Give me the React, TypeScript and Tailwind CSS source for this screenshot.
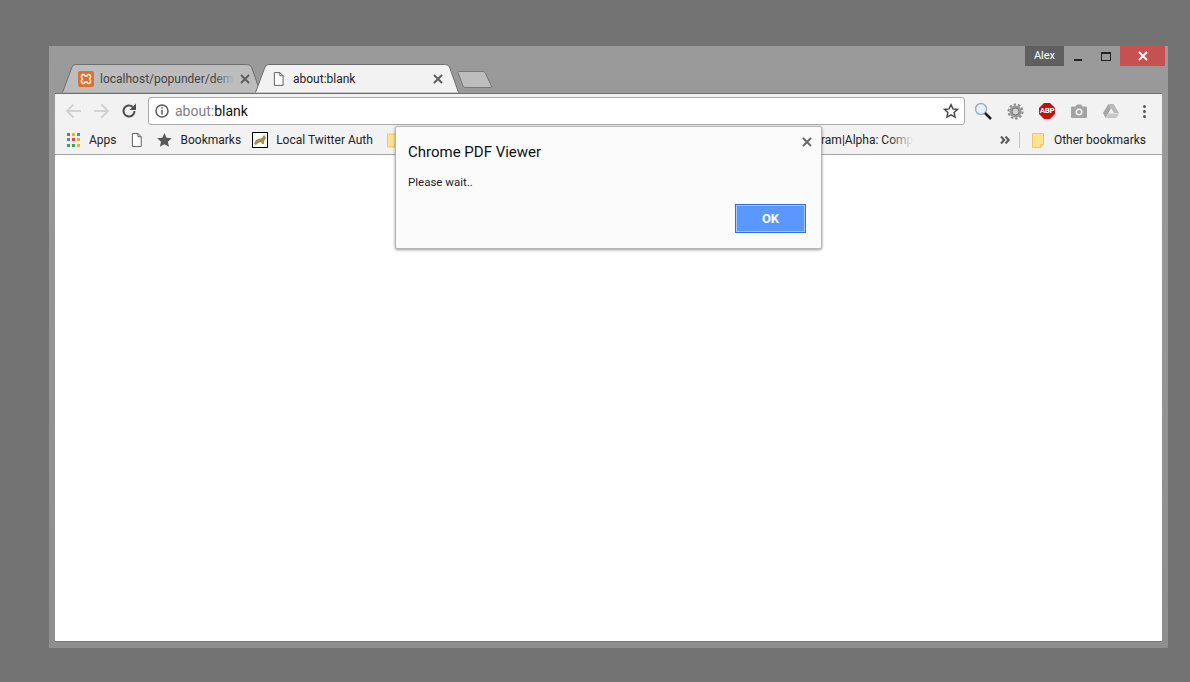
import { ReactNode } from "react";

const FONT = { fontFamily: 'Roboto, "Noto Sans", Arial, sans-serif' };

function PageIcon({ className = "" }: { className?: string }) {
  return (
    <svg viewBox="0 0 12 15" className={className} fill="none">
      <path d="M1.5.5h6l3.5 3.500v10.500h-9.500z" fill="#fff" stroke="#555" />
      <path d="M7.500.5v3.500h3.500" stroke="#555" />
    </svg>
  );
}

function CloseX({ color = "#5f5f5f" }: { color?: string }) {
  return (
    <svg width="10" height="10" viewBox="0 0 10 10">
      <path d="M1 1l8 8M9 1l-8 8" stroke={color} strokeWidth="2" />
    </svg>
  );
}

function Folder({ className = "" }: { className?: string }) {
  return (
    <svg viewBox="0 0 12 15" className={className}>
      <path d="M.5.5h11v11l-3 3H.5z" fill="#fde293" stroke="#eec75f" />
      <path d="M8.500 14.500v-3h3" fill="none" stroke="#eec75f" />
    </svg>
  );
}

function Tab({ active, width, className = "", children }: { active?: boolean; width: number; className?: string; children: ReactNode }) {
  const r = width - 0.5;
  return (
    <div className={`relative h-[29px] shrink-0 ${className}`} style={{ width }}>
      <svg className="absolute inset-0" width={width} height="29" viewBox={`0 0 ${width} 29`}>
        <path
          d={`M0.5 28.5L10 3Q11 .5 14 .5H${r - 14}Q${r - 10} .5 ${r - 9} 3L${r} 28.5`}
          fill={active ? "#f2f2f2" : "#bdbdbd"}
          stroke="#6e6e6e"
        />
      </svg>
      <div className="relative flex h-full items-center">{children}</div>
    </div>
  );
}

function AppsGrid() {
  const colors = ["#e8453c", "#f4b400", "#4285f4", "#4285f4", "#e8453c", "#f4b400", "#34a853", "#34a853", "#f4b400"];
  return (
    <div className="grid h-[14px] w-[14px] grid-cols-3 gap-[2px]">
      {colors.map((c, i) => (
        <span key={i} className="h-[3px] w-[3px]" style={{ background: c }} />
      ))}
    </div>
  );
}

function ToolIcon({ children, className = "w-8" }: { children: ReactNode; className?: string }) {
  return <div className={`flex h-full items-center justify-center ${className}`}>{children}</div>;
}

export default function App() {
  return (
    <div className="relative h-[682px] w-[1190px] overflow-hidden bg-[#737373] pl-[49px] pt-[46px] text-[12px] text-[#222]" style={FONT}>
      {/* browser window */}
      <div className="flex h-[602px] w-[1119px] flex-col bg-gradient-to-b from-[#9a9a9a] to-[#8e8e8e] px-[6px] pb-[6px]">
        {/* tab strip */}
        <div className="relative flex h-[47px] shrink-0 justify-between">
          <div className="flex items-start pl-[7px] pt-[18px]">
            <Tab width={199}>
              <div className="ml-[16px] flex h-[16px] w-[16px] items-center justify-center rounded-[2px] bg-[#dd6f30]">
                <svg width="12" height="12" viewBox="0 0 12 12">
                  <path
                    d="M2.500 1.500h1.500l1 1.500h2l1-1.500h1.500l1 1.500v1.500L9.500 6l1 1.500V9l-1 1.500H8L7 9H5l-1 1.500H2.500l-1-1.500V7.500l1-1.500-1-1.500V3z"
                    fill="none"
                    stroke="#fde9dc"
                    strokeWidth="1.600"
                    strokeLinejoin="round"
                  />
                </svg>
              </div>
              <div className="relative ml-[6px] w-[135px] whitespace-nowrap text-[#444]">
                localhost/popunder/dem
                <span className="absolute inset-y-0 right-0 w-5 bg-gradient-to-r from-transparent to-[#bdbdbd]" />
              </div>
              <div className="ml-[5px]"><CloseX /></div>
            </Tab>
            <Tab active width={204} className="-ml-[6px]">
              <PageIcon className="ml-[18px] h-[14px] w-[11px]" />
              <div className="ml-[9px] w-[136px] whitespace-nowrap">about:blank</div>
              <div className="ml-[4px]"><CloseX /></div>
            </Tab>
            <svg width="36" height="17" viewBox="0 0 36 17" className="-ml-[2px] mt-[7px]">
              <path d="M1 1.500Q1 .5 2 .5H26Q27 .5 28 1.500L34.500 15Q35 16.500 33 16.500H8Q7 16.500 6 15z" fill="#bdbdbd" stroke="#777" />
            </svg>
          </div>
          <div className="-mr-[3px] flex h-[20px] items-stretch">
            <div className="flex w-[39px] items-center justify-center bg-[#5f5f5f] text-[11px] text-white">Alex</div>
            <div className="flex w-[28px] items-end justify-center pb-[5px]">
              <span className="h-[2px] w-[8px] bg-[#222]" />
            </div>
            <div className="flex w-[28px] items-center justify-center">
              <span className="h-[9px] w-[10px] border border-t-2 border-[#222]" />
            </div>
            <div className="flex w-[45px] items-center justify-center bg-[#c75050]">
              <CloseX color="#fff" />
            </div>
          </div>
        </div>

        {/* toolbar */}
        <div className="flex h-[33px] shrink-0 items-center border-t border-[#6e6e6e] bg-[#f2f2f2] pl-[10px] pt-[2px]">
          <svg width="17" height="16" viewBox="0 0 17 16" fill="none" stroke="#d2d2d2" strokeWidth="2">
            <path d="M16 8H2M8.500 1.500L2 8l6.500 6.500" />
          </svg>
          <svg width="17" height="16" viewBox="0 0 17 16" fill="none" stroke="#d2d2d2" strokeWidth="2" className="ml-[11px]">
            <path d="M1 8h14M8.500 1.500L15 8l-6.500 6.500" />
          </svg>
          <svg width="16" height="16" viewBox="0 0 16 16" fill="none" className="ml-[11px]">
            <path d="M13.500 8a5.500 5.500 0 1 1-1.700-4" stroke="#4f4f4f" strokeWidth="2" />
            <path d="M15 .5V7H8.500z" fill="#4f4f4f" />
          </svg>
          <div className="ml-[11px] flex h-[28px] w-[817px] items-center rounded-[3px] border border-[#a9a9a9] bg-white pl-[6px] pr-[5px]">
            <svg width="14" height="14" viewBox="0 0 14 14" fill="none">
              <circle cx="7" cy="7" r="6" stroke="#5a5a5a" strokeWidth="1.500" />
              <path d="M7 6v4.500" stroke="#5a5a5a" strokeWidth="1.500" />
              <path d="M7 3.300v1.500" stroke="#5a5a5a" strokeWidth="1.500" />
            </svg>
            <div className="ml-[6px] flex-1 text-[14px]">
              <span className="text-[#808080]">about:</span>
              <span className="text-[#111]">blank</span>
            </div>
            <svg width="16" height="16" viewBox="0 0 24 24" fill="none" stroke="#4a4a4a" strokeWidth="2.200">
              <path d="M12 2.500l2.900 6.300 6.900.8-5.100 4.700 1.400 6.800-6.100-3.400-6.100 3.400 1.400-6.800-5.100-4.700 6.900-.8z" />
            </svg>
          </div>
          <div className="ml-[2px] flex h-full items-center">
            <ToolIcon>
              <svg width="18" height="18" viewBox="0 0 18 18" fill="none">
                <circle cx="7" cy="7" r="5.500" fill="#e6f1fa" stroke="#9fb0bd" strokeWidth="1.500" />
                <path d="M11 11l6 6" stroke="#222" strokeWidth="2.500" />
              </svg>
            </ToolIcon>
            <ToolIcon>
              <svg width="17" height="17" viewBox="0 0 17 17">
                <circle cx="8.500" cy="8.500" r="7" fill="none" stroke="#8a8a8a" strokeWidth="2" strokeDasharray="2.500 1.900" />
                <circle cx="8.500" cy="8.500" r="6" fill="#999" />
                <circle cx="8.500" cy="8.500" r="3.500" fill="#d2d2d2" stroke="#777" />
              </svg>
            </ToolIcon>
            <ToolIcon>
              <div className="relative flex h-[16px] w-[16px] items-center justify-center">
                <svg width="16" height="16" viewBox="0 0 16 16" className="absolute inset-0">
                  <path d="M5 0h6l5 5v6l-5 5H5l-5-5V5z" fill="#c70d0d" />
                </svg>
                <span className="relative text-[8px] font-bold leading-none tracking-[-0.3px] text-white">ABP</span>
              </div>
            </ToolIcon>
            <ToolIcon>
              <svg width="16" height="14" viewBox="0 0 16 14">
                <path d="M1 2.500h3.500L6 .5h4l1.500 2H15a1 1 0 0 1 1 1V13a1 1 0 0 1-1 1H1a1 1 0 0 1-1-1V3.500a1 1 0 0 1 1-1z" fill="#a3a3a3" />
                <circle cx="8" cy="8" r="3.500" fill="#f2f2f2" />
                <circle cx="8" cy="8" r="2" fill="#a3a3a3" />
              </svg>
            </ToolIcon>
            <ToolIcon>
              <svg width="16" height="14" viewBox="0 0 16 14">
                <path d="M5.500 0h5l5.500 9h-5z" fill="#b9b9b9" />
                <path d="M5.500 0L0 9l2.500 5 5.500-9.500z" fill="#a6a6a6" />
                <path d="M5.200 9.500H16L13.500 14H2.700z" fill="#c8c8c8" />
              </svg>
            </ToolIcon>
            <ToolIcon className="w-[34px]">
              <div className="flex flex-col gap-[2px]">
                <span className="h-[3px] w-[3px] rounded-full bg-[#555]" />
                <span className="h-[3px] w-[3px] rounded-full bg-[#555]" />
                <span className="h-[3px] w-[3px] rounded-full bg-[#555]" />
              </div>
            </ToolIcon>
          </div>
        </div>

        {/* bookmarks bar */}
        <div className="flex h-[29px] shrink-0 items-center whitespace-nowrap border-b border-[#a5a5a5] bg-[#f2f2f2] pl-[12px] pr-[16px]">
          <div className="flex w-[331px] items-center">
            <AppsGrid />
            <span className="ml-[9px] w-[28px] text-right">Apps</span>
            <PageIcon className="ml-[14px] h-[14px] w-[12px]" />
            <svg width="16" height="16" viewBox="0 0 16 16" className="ml-[15px]">
              <path d="M8 .5l2.300 5 5.500.6-4.100 3.700 1.200 5.400L8 12.500l-4.900 2.700 1.200-5.400L.2 6.100l5.500-.6z" fill="#5a5a5a" />
            </svg>
            <span className="ml-[9px]">Bookmarks</span>
            <div className="ml-[11px] flex h-[16px] w-[16px] items-center justify-center border border-black bg-white">
              <svg width="14" height="14" viewBox="0 0 14 14">
                <path d="M1 11l2-4 2-1 4-1 2-3 1 1 1 2-2 3v3H9l-1-2-3 1-2 2z" fill="#b08a4a" />
              </svg>
            </div>
            <span className="ml-[8px]">Local Twitter Auth</span>
            <Folder className="ml-[14px] h-[15px] w-[12px]" />
          </div>
          <div className="relative ml-[423px]">
            ram|Alpha: Comp
            <span className="absolute inset-y-0 right-0 w-6 bg-gradient-to-r from-transparent to-[#f2f2f2]" />
          </div>
          <div className="ml-auto flex items-center">
            <svg width="10" height="8" viewBox="0 0 10 8" fill="none" stroke="#555" strokeWidth="2">
              <path d="M1 .5L4.200 4 1 7.500M5.500 .5L8.700 4 5.500 7.500" />
            </svg>
            <span className="ml-[9px] h-[16px] w-px bg-[#c4c4c4]" />
            <Folder className="ml-[12px] h-[15px] w-[12px]" />
            <span className="ml-[10px]">Other bookmarks</span>
          </div>
        </div>

        {/* page */}
        <div className="flex-1 border-b border-[#777] bg-white" />
      </div>

      {/* alert dialog */}
      <div className="absolute left-[395px] top-[126px] flex h-[123px] w-[427px] flex-col rounded-[2px] border border-[#b5b5b5] bg-[#fbfbfb] px-[12px] shadow-[0_1px_3px_rgba(0,0,0,0.4)]">
        <div className="absolute right-[9px] top-[10px]">
          <CloseX color="#6a6a6a" />
        </div>
        <div className="mt-[14px] text-[15px] leading-[22px] text-[#111]">Chrome PDF Viewer</div>
        <div className="mt-[11px] text-[11.5px] leading-[16px] text-[#222]">Please wait..</div>
        <div className="mt-[14px] flex justify-end pr-[3px]">
          <button className="h-[29px] w-[71px] border border-[#3071d8] bg-[#5a97ff] text-[13px] font-bold text-white shadow-[inset_0_0_0_1px_#a9c8ff]">
            OK
          </button>
        </div>
      </div>
    </div>
  );
}
